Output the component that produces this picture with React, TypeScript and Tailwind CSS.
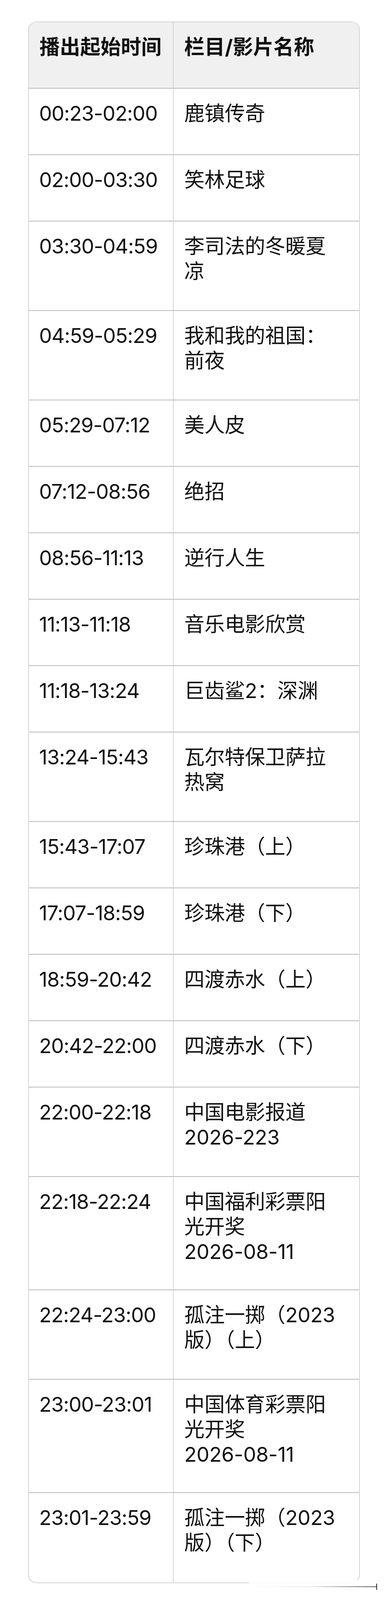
const schedule = [
  { time: "00:23-02:00", title: ["鹿镇传奇"] },
  { time: "02:00-03:30", title: ["笑林足球"] },
  { time: "03:30-04:59", title: ["李司法的冬暖夏", "凉"] },
  { time: "04:59-05:29", title: ["我和我的祖国：", "前夜"] },
  { time: "05:29-07:12", title: ["美人皮"] },
  { time: "07:12-08:56", title: ["绝招"] },
  { time: "08:56-11:13", title: ["逆行人生"] },
  { time: "11:13-11:18", title: ["音乐电影欣赏"] },
  { time: "11:18-13:24", title: ["巨齿鲨2：深渊"] },
  { time: "13:24-15:43", title: ["瓦尔特保卫萨拉", "热窝"] },
  { time: "15:43-17:07", title: ["珍珠港（上）"] },
  { time: "17:07-18:59", title: ["珍珠港（下）"] },
  { time: "18:59-20:42", title: ["四渡赤水（上）"] },
  { time: "20:42-22:00", title: ["四渡赤水（下）"] },
  { time: "22:00-22:18", title: ["中国电影报道", "2026-223"] },
  { time: "22:18-22:24", title: ["中国福利彩票阳", "光开奖", "2026-08-11"] },
  { time: "22:24-23:00", title: ["孤注一掷（2023", "版）（上）"] },
  { time: "23:00-23:01", title: ["中国体育彩票阳", "光开奖", "2026-08-11"] },
  { time: "23:01-23:59", title: ["孤注一掷（2023", "版）（下）"] },
];

const rowHeight: Record<number, string> = {
  1: "h-[170px]",
  2: "h-[229px]",
  3: "h-[290px]",
};

export default function App() {
  return (
    <div
      className="relative w-full bg-white px-[72px] pb-[40px] pt-[55px] text-[#111]"
      style={{ fontFamily: '"Inter", "Noto Sans CJK SC", sans-serif' }}
    >
      <div className="overflow-hidden rounded-[24px/19px] border-2 border-[#d4d4d4]">
        {/* Header */}
        <div className="grid h-[170px] grid-cols-[370px_1fr] border-b-2 border-[#bababa] bg-[#f0f0f0] text-[52px] leading-[64px] font-bold">
          <div className="border-r-2 border-[#d2d2d2] pl-[27px] pt-[32px]">播出起始时间</div>
          <div className="pl-[27px] pt-[32px]">栏目/影片名称</div>
        </div>

        {/* Rows */}
        {schedule.map((row, i) => (
          <div
            key={row.time}
            className={`grid grid-cols-[370px_1fr] text-[52px] leading-[64px] ${rowHeight[row.title.length]} ${
              i < schedule.length - 1 ? "border-b-2 border-[#bababa]" : ""
            }`}
          >
            <div className="border-r-2 border-[#d6d6d6] pl-[26px] pt-[32px] tracking-[-1px]">{row.time}</div>
            <div className="flex flex-col pl-[27px] pt-[32px] tracking-[-0.3px]">
              {row.title.map((line) => (
                <span key={line}>{line}</span>
              ))}
            </div>
          </div>
        ))}
      </div>

      {/* faded scroll handle over the bottom-right corner */}
      <div className="absolute bottom-[12px] left-[636px] flex h-[36px] w-[356px] items-center bg-white/85 pb-[3px]">
        <div className="h-[2px] flex-1 bg-gradient-to-r from-transparent via-[#e6e6e6] to-[#555]" />
        <div className="mr-[28px] h-[16px] w-[2px] bg-[#222]" />
      </div>
    </div>
  );
}
